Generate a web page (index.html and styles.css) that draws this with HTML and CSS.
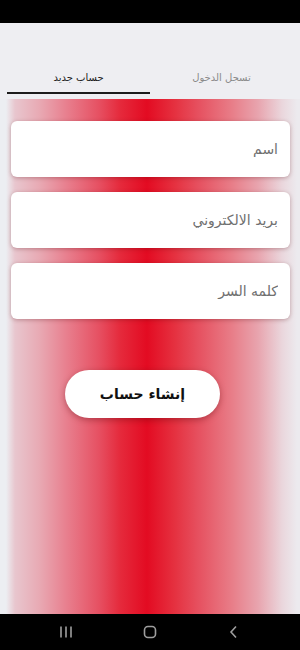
FILE: index.html
```html
<!DOCTYPE html>
<html lang="ar" dir="rtl">
  <head>
    <meta charset="UTF-8" />
    <meta name="viewport" content="width=device-width, initial-scale=1.0" />
    <title>حساب جديد</title>
    <link rel="stylesheet" href="styles.css">
  </head>
  <body>
    <div class="status-bar"></div>

    <div class="tabs">
      <div class="tab">تسجل الدخول</div>
      <div class="tab active">حساب جديد</div>
    </div>

    <div class="form-area">
      <div class="field"><input type="text" placeholder="اسم" /></div>
      <div class="field"><input type="email" placeholder="بريد الالكتروني" /></div>
      <div class="field"><input type="password" placeholder="كلمه السر" /></div>

      <div class="submit-row">
        <button class="submit-btn">إنشاء حساب</button>
      </div>
    </div>

    <div class="nav-bar">
      <span class="nav-icon">
        <svg width="14" height="14" viewBox="0 0 14 14">
          <path d="M2 1.5v11M7 1.5v11M12 1.5v11" stroke="#9e9e9e" stroke-width="1.6" fill="none" />
        </svg>
      </span>
      <span class="nav-icon">
        <svg width="14" height="14" viewBox="0 0 14 14">
          <rect x="1.5" y="1.5" width="11" height="11" rx="3.5" stroke="#9e9e9e" stroke-width="1.6" fill="none" />
        </svg>
      </span>
      <span class="nav-icon">
        <svg width="14" height="14" viewBox="0 0 14 14">
          <path d="M9 1.5L4 7l5 5.5" stroke="#9e9e9e" stroke-width="1.6" fill="none" />
        </svg>
      </span>
    </div>
  </body>
</html>
```

FILE: styles.css
```css
body {
  margin: 0;
  padding: 0;
  width: 300px;
  height: 650px;
  display: flex;
  flex-direction: column;
  background-color: #eeeef2;
  font-family: "DejaVu Sans", "Noto Sans", sans-serif;
  overflow: hidden;
}

.status-bar {
  height: 23px;
  background-color: #000;
}

/* Tabs */
.tabs {
  height: 76px;
  display: flex;
  align-items: flex-end;
  padding: 0 7px 5px 7px;
  box-sizing: border-box;
}

.tab {
  flex: 1;
  text-align: center;
  font-size: 10px;
  color: #8a8a8a;
  padding-bottom: 9px;
  border-bottom: 2px solid transparent;
}

.tab.active {
  color: #1c1c1c;
  border-bottom-color: #1c1c1c;
}

/* Form */
.form-area {
  flex: 1;
  padding: 22px 10px 0 11px;
  display: flex;
  flex-direction: column;
  gap: 15px;
  background: linear-gradient(
    to right,
    #eceef2 2%,
    #e8c6ce 5%,
    #e8aab4 13%,
    #e8808f 22%,
    #e65062 33%,
    #e52a3c 40%,
    #e30b22 49%,
    #e5303f 58%,
    #e6505f 66%,
    #e87c87 77%,
    #e8a4ae 86%,
    #ead6dc 94%,
    #eceaee 99%
  );
}

.field {
  height: 56px;
  background-color: #fff;
  border-radius: 6px;
  box-shadow: 0 1px 4px rgba(80, 0, 10, 0.3);
}

.field input {
  width: 100%;
  height: 100%;
  box-sizing: border-box;
  border: none;
  background: transparent;
  padding: 0 12px;
  font-family: inherit;
  font-size: 14px;
  color: #333;
  outline: none;
}

.field input::placeholder {
  color: #707070;
}

.submit-row {
  direction: ltr;
  margin-top: 36px;
  padding-left: 54px;
}

.submit-btn {
  width: 155px;
  height: 48px;
  border: none;
  border-radius: 24px;
  background-color: #fff;
  font-family: inherit;
  font-size: 14px;
  font-weight: bold;
  color: #111;
  box-shadow: 0 2px 6px rgba(80, 0, 10, 0.35);
  cursor: pointer;
}

/* Android nav */
.nav-bar {
  height: 36px;
  background-color: #000;
  display: flex;
  direction: ltr;
  justify-content: center;
  align-items: center;
  gap: 70px;
}

.nav-icon {
  display: flex;
}
```
